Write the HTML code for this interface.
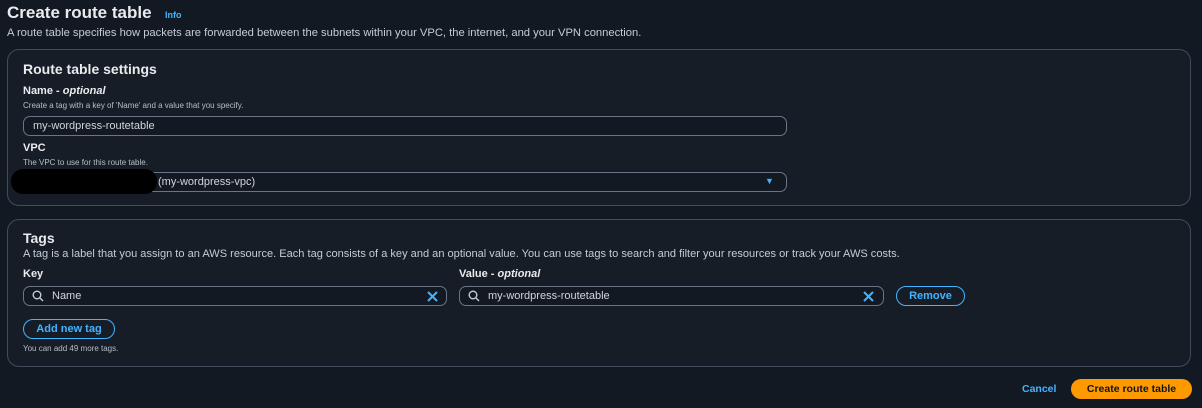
<!DOCTYPE html>
<html><head><style>
body{margin:0;width:1202px;height:408px;background:#131922;font-family:"Liberation Sans",sans-serif;color:#e9ebed;position:relative;overflow:hidden}
.a{position:absolute;white-space:nowrap}
.card{position:absolute;left:7px;width:1184px;background:#161d27;border:1px solid #414d5c;border-radius:12px;box-sizing:border-box}
.in{position:absolute;border:1px solid #6b7585;border-radius:7px;box-sizing:border-box;height:20px;font-size:11px;line-height:18px;color:#d1d5db;background:#131922}
.lbl{font-size:11px;font-weight:bold}
.hint{font-size:8px;color:#b6bec9}
.btn{position:absolute;border:1.5px solid #42b4ff;border-radius:12px;box-sizing:border-box;color:#42b4ff;font-weight:bold;font-size:11px;text-align:center}
</style></head><body>
<div class="a" style="left:7px;top:3px;font-size:17px;font-weight:bold">Create route table</div>
<div class="a" style="left:165px;top:10px;font-size:9px;color:#42b4ff;font-weight:bold">Info</div>
<div class="a" style="left:7px;top:27px;font-size:11.2px;color:#c6ccd4">A route table specifies how packets are forwarded between the subnets within your VPC, the internet, and your VPN connection.</div>
<div class="card" style="top:49px;height:157px"></div>
<div class="a" style="left:23px;top:61px;font-size:14px;font-weight:bold">Route table settings</div>
<div class="a lbl" style="left:23px;top:85px">Name - <i>optional</i></div>
<div class="a hint" style="left:23px;top:101px">Create a tag with a key of 'Name' and a value that you specify.</div>
<div class="in" style="left:23px;top:116px;width:764px;padding-left:9px">my-wordpress-routetable</div>
<div class="a lbl" style="left:23px;top:142px">VPC</div>
<div class="a hint" style="left:23px;top:158px">The VPC to use for this route table.</div>
<div class="in" style="left:23px;top:172px;width:764px;padding-left:134px">(my-wordpress-vpc)</div>
<div class="a" style="left:11px;top:169px;width:146px;height:25px;background:#000;border-radius:12px"></div>
<div class="a" style="left:765px;top:176px;font-size:9px;color:#42b4ff">▼</div>
<div class="card" style="top:219px;height:148px"></div>
<div class="a" style="left:23px;top:230px;font-size:14px;font-weight:bold">Tags</div>
<div class="a" style="left:23px;top:248px;font-size:11.05px;color:#c6ccd4">A tag is a label that you assign to an AWS resource. Each tag consists of a key and an optional value. You can use tags to search and filter your resources or track your AWS costs.</div>
<div class="a lbl" style="left:23px;top:268px">Key</div>
<div class="a lbl" style="left:459px;top:268px">Value - <i>optional</i></div>
<div class="in" style="left:23px;top:286px;width:424px;padding-left:28px">Name</div>
<div class="in" style="left:459px;top:286px;width:425px;padding-left:28px">my-wordpress-routetable</div>
<svg class="a" style="left:32px;top:290px" width="12" height="12" viewBox="0 0 12 12"><circle cx="5" cy="5" r="3.8" fill="none" stroke="#c6ccd4" stroke-width="1.4"/><path d="M8 8l3 3" stroke="#c6ccd4" stroke-width="1.4"/></svg>
<svg class="a" style="left:468px;top:290px" width="12" height="12" viewBox="0 0 12 12"><circle cx="5" cy="5" r="3.8" fill="none" stroke="#c6ccd4" stroke-width="1.4"/><path d="M8 8l3 3" stroke="#c6ccd4" stroke-width="1.4"/></svg>
<svg class="a" style="left:427px;top:291px" width="11" height="11" viewBox="0 0 11 11"><path d="M1 1l9 9M10 1l-9 9" stroke="#42b4ff" stroke-width="2"/></svg>
<svg class="a" style="left:863px;top:291px" width="11" height="11" viewBox="0 0 11 11"><path d="M1 1l9 9M10 1l-9 9" stroke="#42b4ff" stroke-width="2"/></svg>
<div class="btn" style="left:896px;top:286px;width:69px;height:20px;line-height:18px">Remove</div>
<div class="btn" style="left:23px;top:319px;width:92px;height:20px;line-height:18px">Add new tag</div>
<div class="a hint" style="left:23px;top:344px">You can add 49 more tags.</div>
<div class="a" style="left:1022px;top:383px;font-size:10.5px;font-weight:bold;color:#42b4ff">Cancel</div>
<div class="a" style="left:1071px;top:379px;width:121px;height:20px;background:#ff9900;border-radius:10px;color:#0f141a;font-weight:bold;font-size:10.5px;text-align:center;line-height:20px">Create route table</div>
</body></html>
